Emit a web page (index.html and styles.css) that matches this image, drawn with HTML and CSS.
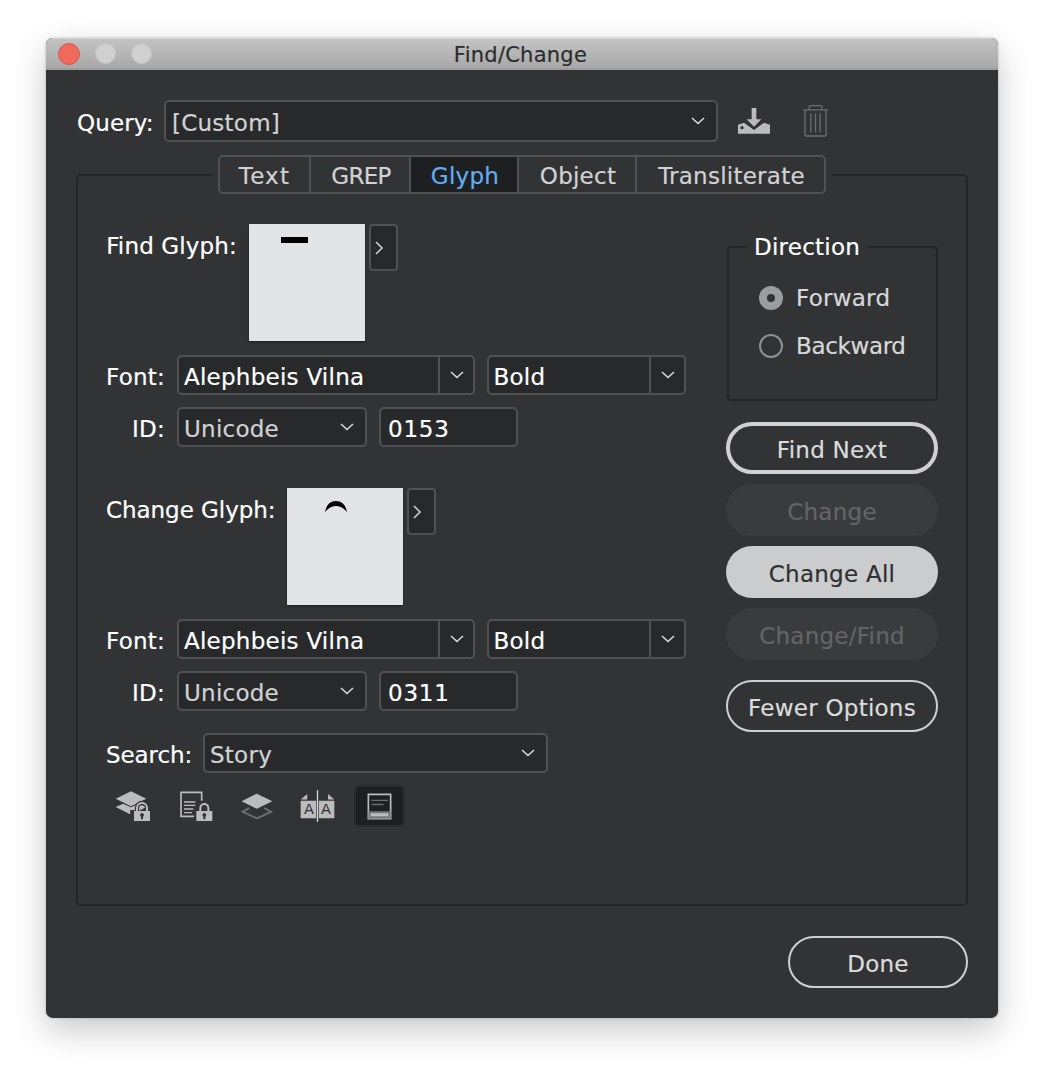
FILE: index.html
```html
<!DOCTYPE html>
<html>

<head>
	<title>Find/Change</title>
	<link rel="stylesheet" href="styles.css">
</head>

<body>
	<div class="window">
		<div class="titlebar">
			<div class="lights">
				<span class="light close"></span>
				<span class="light"></span>
				<span class="light"></span>
			</div>
			<div class="title">Find/Change</div>
		</div>

		<div class="content">
			<div class="query-row">
				<label class="query-label">Query:</label>
				<div class="select query-select">
					<span class="value dim">[Custom]</span>
					<svg class="chevron" viewBox="0 0 14 8"><path d="M1 1l6 5.500 6-5.500"/></svg>
				</div>
				<svg class="save-icon" viewBox="654 250 96 78">
					<path class="fill" d="M695 250h14v34h15l-22 22-22-22h15z"/>
					<path class="fill" fill-rule="evenodd" d="M654 300l18-6 30 22 30-22 18 6v27h-96zM666 304a5 5 0 1 0 .1 10 5 5 0 1 0-.1-10z"/>
				</svg>
				<svg class="trash-icon" viewBox="845 243 80 97">
					<path d="M848 258h75M866 258v-10q0-3 3-3h32q3 0 3 3v10M853 258v75q0 4 4 4h56q4 0 4-4v-75M871 268v58M885 268v58M899 268v58"/>
				</svg>
			</div>

			<fieldset class="group">
				<legend class="tabs">
					<span class="tab tab-text">Text</span>
					<span class="tab tab-grep">GREP</span>
					<span class="tab tab-glyph active">Glyph</span>
					<span class="tab tab-object">Object</span>
					<span class="tab tab-trans">Transliterate</span>
				</legend>

				<div class="columns">
					<div class="left">
						<div class="glyph-row">
							<label class="label find-label">Find Glyph:</label>
							<div class="well"><span class="mark-dash"></span></div>
							<div class="more"><svg viewBox="0 0 8 14"><path d="M1 1l6 6-6 6"/></svg></div>
						</div>
						<div class="row font-row">
							<label class="label short">Font:</label>
							<div class="select combo font-select">
								<span class="value">Alephbeis Vilna</span>
								<span class="combo-btn"><svg class="chevron" viewBox="0 0 14 8"><path d="M1 1l6 5.500 6-5.500"/></svg></span>
							</div>
							<div class="select combo style-select">
								<span class="value">Bold</span>
								<span class="combo-btn"><svg class="chevron" viewBox="0 0 14 8"><path d="M1 1l6 5.500 6-5.500"/></svg></span>
							</div>
						</div>
						<div class="row">
							<label class="label short">ID:</label>
							<div class="select id-select">
								<span class="value dim">Unicode</span>
								<svg class="chevron" viewBox="0 0 14 8"><path d="M1 1l6 5.500 6-5.500"/></svg>
							</div>
							<div class="select id-input"><span class="value">0153</span></div>
						</div>

						<div class="glyph-row second">
							<label class="label change-label">Change Glyph:</label>
							<div class="well">
								<svg class="mark-arc" viewBox="0 0 22 12"><path d="M0 12Q2 1 11 1t11 11Q17 6 11 6T0 12z"/></svg>
							</div>
							<div class="more"><svg viewBox="0 0 8 14"><path d="M1 1l6 6-6 6"/></svg></div>
						</div>
						<div class="row font-row">
							<label class="label short">Font:</label>
							<div class="select combo font-select">
								<span class="value">Alephbeis Vilna</span>
								<span class="combo-btn"><svg class="chevron" viewBox="0 0 14 8"><path d="M1 1l6 5.500 6-5.500"/></svg></span>
							</div>
							<div class="select combo style-select">
								<span class="value">Bold</span>
								<span class="combo-btn"><svg class="chevron" viewBox="0 0 14 8"><path d="M1 1l6 5.500 6-5.500"/></svg></span>
							</div>
						</div>
						<div class="row">
							<label class="label short">ID:</label>
							<div class="select id-select">
								<span class="value dim">Unicode</span>
								<svg class="chevron" viewBox="0 0 14 8"><path d="M1 1l6 5.500 6-5.500"/></svg>
							</div>
							<div class="select id-input"><span class="value">0311</span></div>
						</div>

						<div class="row search-row">
							<label class="label search-label">Search:</label>
							<div class="select search-select">
								<span class="value dim">Story</span>
								<svg class="chevron" viewBox="0 0 14 8"><path d="M1 1l6 5.500 6-5.500"/></svg>
							</div>
						</div>

						<div class="icon-row">
							<svg class="icon icon-a" viewBox="60 65 105 90">
								<path class="fill" d="M62 88l46-22 46 22-46 23z"/>
								<path class="fill" d="M62 113l22-10 24 11 24-11 23 10-47 23z"/>
								<path class="halo" d="M126 126v-10a15 15 0 0 1 30 0v10M112 122v36"/>
								<path class="line lock" d="M126 126v-10a15 15 0 0 1 30 0v10"/>
								<path class="fill" fill-rule="evenodd" d="M117 125h48v30h-48zM141 131a6 6 0 0 0-3 11v8h6v-8a6 6 0 0 0-3-11z"/>
							</svg>
							<svg class="icon icon-b" viewBox="255 65 97 90">
								<path class="line" d="M296 141h-39V69h62v25"/>
								<path class="line thin" d="M266 98h34M266 108h34M266 119h28M266 130h24"/>
								<path class="line lock" d="M315 126v-10a12 12 0 0 1 24 0v10"/>
								<path class="fill" fill-rule="evenodd" d="M303 125h48v30h-48zM327 131a6 6 0 0 0-3 11v8h6v-8a6 6 0 0 0-3-11z"/>
							</svg>
							<svg class="icon icon-c" viewBox="438 65 97 80">
								<path class="line faint" d="M463 110l-20 11 43 20 43-20-20-11"/>
								<path class="fill" d="M440 89l46-23 47 23-47 23z"/>
							</svg>
							<svg class="icon icon-d" viewBox="613 60 106 96">
								<path class="fill" d="M615 88l20-16v16zM615 92h47v53h-47zM717 88l-19-16v16zM717 92h-47v53h47z"/>
								<path class="line white" d="M666 60v96"/>
								<text class="icon-letter" x="640" y="133">A</text>
								<text class="icon-letter" x="692" y="133">A</text>
							</svg>
							<div class="icon-active">
								<svg class="icon icon-e" viewBox="818 65 74 80">
									<path class="line" d="M822 69h66v72h-66z"/>
									<path class="line dark" d="M831 87h49M831 99h36"/>
									<path class="fill-mid" d="M822 119h66v22h-66z"/>
									<path class="fill" d="M829 125h52v9h-52z"/>
								</svg>
							</div>
						</div>
					</div>

					<div class="right">
						<fieldset class="direction">
							<legend class="direction-title">Direction</legend>
							<div class="radio-row">
								<span class="radio checked"></span>
								<span class="radio-label">Forward</span>
							</div>
							<div class="radio-row">
								<span class="radio"></span>
								<span class="radio-label backward">Backward</span>
							</div>
						</fieldset>
						<div class="buttons">
							<div class="btn btn-default">Find Next</div>
							<div class="btn btn-disabled">Change</div>
							<div class="btn btn-pressed">Change All</div>
							<div class="btn btn-disabled">Change/Find</div>
							<div class="btn btn-outline fewer">Fewer Options</div>
						</div>
					</div>
				</div>
			</fieldset>

			<div class="footer">
				<div class="btn btn-outline done">Done</div>
			</div>
		</div>
	</div>
</body>

</html>
```

FILE: styles.css
```css
* {
	box-sizing: border-box;
}

body {
	margin: 0;
	height: 1072px;
	padding: 38px 46px 0;
	background-color: #fff;
	font-family: "DejaVu Sans", sans-serif;
	font-size: 23px;
	letter-spacing: 0.25px;
	-webkit-text-stroke: 0.2px;
	color: #fff;
	overflow: hidden;
}

.window {
	width: 952px;
	height: 980px;
	border-radius: 7px;
	background-color: #323335;
	box-shadow: 0 12px 34px rgba(0, 0, 0, 0.22), 0 0 3px rgba(0, 0, 0, 0.2);
	overflow: hidden;
}

.titlebar {
	position: relative;
	height: 32px;
	background: linear-gradient(#c3c3c3, #a8a8a8);
	border-top: 1px solid #d2d2d2;
	border-bottom: 2px solid #9d9d9d;
}

.lights {
	position: absolute;
	left: 12px;
	top: 4px;
	display: flex;
	gap: 15px;
}

.light {
	width: 21px;
	height: 21px;
	border-radius: 50%;
	background-color: #d0d0d0;
	border: 1px solid #c4c4c4;
}

.light.close {
	width: 22px;
	height: 22px;
	background-color: #ee6a5f;
	border-color: #d8574c;
}

.title {
	text-align: center;
	padding-top: 2px;
	line-height: 29px;
	font-size: 21px;
	color: #2c2c2e;
	margin-left: -3px;
}

.content {
	padding: 30px 30px 0;
}

/* query */

.query-row {
	display: flex;
	align-items: center;
	height: 42px;
	padding-left: 1px;
}

.query-label {
	width: 87px;
	padding-top: 3px;
	letter-spacing: 0.1px;
}

.select {
	position: relative;
	display: flex;
	align-items: center;
	height: 40px;
	background-color: #28292b;
	border: 2px solid #505153;
	border-radius: 5px;
	padding-left: 5px;
}

.query-select {
	width: 554px;
	height: 42px;
	padding-left: 6px;
}

.value {
	flex: 1;
	padding-top: 3px;
	white-space: nowrap;
}

.dim {
	color: #d2d2d2;
}

.chevron {
	width: 14px;
	height: 8px;
	margin-right: 11px;
	fill: none;
	stroke: #d8d8d8;
	stroke-width: 1.6;
}

.save-icon {
	width: 32px;
	height: 26px;
	margin-left: 20px;
}

.save-icon .fill {
	fill: #bcbcbe;
}

.trash-icon {
	width: 27px;
	height: 32px;
	margin-left: 32px;
	fill: none;
	stroke: #6c6d6f;
	stroke-width: 4;
}

/* group with tabs */

.group {
	width: 892px;
	height: 751px;
	margin: 13px 0 0;
	padding: 30px 28px 0;
	border: 2px solid #242527;
	border-radius: 5px;
}

.tabs {
	display: flex;
	margin: 0 auto;
	padding: 0 6px;
	height: 39px;
	font-size: 23px;
}

.tab {
	display: flex;
	align-items: center;
	justify-content: center;
	height: 39px;
	padding-top: 3px;
	border: 2px solid #505153;
	border-left-width: 0;
	color: #d2d2d2;
}

.tab-text {
	width: 93px;
	border-left-width: 2px;
	border-radius: 5px 0 0 5px;
	letter-spacing: 1.2px;
}

.tab-grep {
	width: 100px;
	padding-left: 2px;
	letter-spacing: -0.7px;
}

.tab-glyph {
	width: 108px;
	padding-left: 2px;
}

.tab-object {
	width: 118px;
	padding-left: 2px;
}

.tab-trans {
	width: 189px;
	padding-left: 2px;
	border-radius: 0 5px 5px 0;
}

.tab.active {
	background-color: #1e1f21;
	color: #63aef0;
}

.columns {
	display: flex;
	justify-content: space-between;
}

.left {
	width: 580px;
}

.label {
	flex: none;
	padding-top: 3px;
	text-align: right;
	white-space: nowrap;
}

.short {
	width: 59px;
}

.find-label {
	width: 131px;
	letter-spacing: 0.15px;
}

.change-label {
	width: 169px;
	letter-spacing: -0.05px;
}

.search-label {
	width: 85px;
	letter-spacing: -0.1px;
}

/* glyph preview */

.glyph-row {
	display: flex;
	align-items: flex-start;
	gap: 12px;
}

.glyph-row .label {
	line-height: 38px;
}

.glyph-row.second {
	margin-top: 41px;
}

.well {
	flex: none;
	width: 116px;
	height: 117px;
	margin-right: 1px;
	background-color: #e2e3e5;
	box-shadow: 0 1px 2px rgba(0, 0, 0, 0.45);
}

.mark-dash {
	display: block;
	width: 27px;
	height: 6px;
	margin: 13px 0 0 32px;
	background-color: #000;
}

.mark-arc {
	display: block;
	width: 22px;
	height: 12px;
	margin: 12px 0 0 38px;
}

.more {
	flex: none;
	display: flex;
	align-items: center;
	justify-content: center;
	width: 29px;
	height: 47px;
	margin: 0 0 0 -9px;
	background-color: #28292b;
	border: 2px solid #505153;
	border-radius: 4px;
}

.more svg {
	width: 8px;
	height: 14px;
	margin-right: 9px;
	fill: none;
	stroke: #c8c8c8;
	stroke-width: 1.6;
}

/* form rows */

.row {
	display: flex;
	align-items: center;
	gap: 12px;
	margin-top: 12px;
}

.font-row {
	margin-top: 14px;
}

.combo {
	padding-right: 0;
}

.font-select {
	width: 299px;
}

.style-select {
	width: 199px;
	padding-left: 4px;
}

.combo-btn {
	display: flex;
	align-items: center;
	justify-content: center;
	width: 35px;
	height: 100%;
	border-left: 2px solid #505153;
}

.combo-btn .chevron {
	margin: 0;
}

.id-select {
	width: 190px;
}

.id-input {
	width: 139px;
	padding-left: 7px;
	letter-spacing: 0.8px;
}

.search-row {
	margin-top: 22px;
}

.search-select {
	width: 345px;
}

/* small icons under search */

.icon-row {
	display: flex;
	align-items: center;
	height: 42px;
	margin-top: 12px;
}

.icon {
	flex: none;
}

.icon .fill {
	fill: #bcbcbe;
}

.icon .fill-mid {
	fill: #77787a;
}

.icon .halo {
	fill: none;
	stroke: #323335;
	stroke-width: 13;
}

.icon .line {
	fill: none;
	stroke: #bcbcbe;
	stroke-width: 5;
}

.icon .line.lock {
	stroke-width: 6;
}

.icon .line.thin {
	stroke-width: 4;
}

.icon .line.faint {
	stroke: #6c6d6f;
	stroke-width: 6;
}

.icon .line.white {
	stroke: #d8d8d8;
	stroke-width: 4;
}

.icon .line.dark {
	stroke: #6c6d6f;
	stroke-width: 4;
}

.icon-letter {
	font-size: 44px;
	letter-spacing: 0;
	fill: #2f3032;
	stroke: none;
	text-anchor: middle;
}

.icon-a {
	width: 35px;
	height: 30px;
	margin-left: 9px;
}

.icon-b {
	width: 33px;
	height: 30px;
	margin-left: 30px;
}

.icon-c {
	width: 32px;
	height: 27px;
	margin-left: 28px;
}

.icon-d {
	width: 35px;
	height: 32px;
	margin-left: 27px;
}

.icon-active {
	display: flex;
	align-items: center;
	justify-content: center;
	width: 51px;
	height: 42px;
	margin-left: 19px;
	background-color: #1e1f21;
	border: 2px solid #2a2b2d;
	border-radius: 5px;
}

.icon-e {
	width: 25px;
	height: 27px;
}

/* direction */

.right {
	width: 212px;
	padding-top: 9px;
}

.direction {
	width: 211px;
	height: 168px;
	margin: 0 0 0 1px;
	padding: 13px 0 0;
	border: 2px solid #242527;
	border-radius: 4px;
}

.direction-title {
	margin-left: 18px;
	padding: 0 7px;
	line-height: 28px;
}

.radio-row {
	display: flex;
	align-items: center;
	gap: 13px;
	height: 48px;
	padding-left: 30px;
}

.radio {
	display: flex;
	align-items: center;
	justify-content: center;
	width: 24px;
	height: 24px;
	border: 2px solid #8f9092;
	border-radius: 50%;
}

.radio.checked {
	background-color: #9b9c9e;
	border-color: #9b9c9e;
}

.radio.checked::after {
	content: "";
	width: 8px;
	height: 8px;
	border-radius: 50%;
	background-color: #323335;
}

.radio-label {
	color: #d8d8d8;
}

.backward {
	letter-spacing: -0.35px;
}

/* buttons */

.buttons {
	display: flex;
	flex-direction: column;
	gap: 10px;
	margin-top: 21px;
}

.btn {
	display: flex;
	align-items: center;
	justify-content: center;
	height: 52px;
	padding-top: 3px;
	border-radius: 26px;
	white-space: nowrap;
	color: #dcdcdc;
}

.btn-default {
	border: 4px solid #d0d0d2;
}

.btn-disabled {
	background-color: #3a3b3d;
	color: #636466;
}

.btn-pressed {
	background-color: #cbccce;
	color: #2f3032;
}

.btn-outline {
	border: 2px solid #cfcfd1;
}

.fewer {
	margin-top: 10px;
}

.footer {
	display: flex;
	justify-content: flex-end;
	margin-top: 30px;
}

.done {
	width: 180px;
}
```
